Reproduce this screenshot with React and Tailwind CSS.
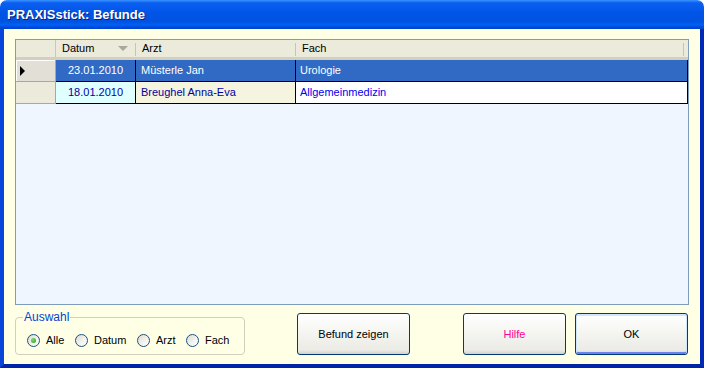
import React from "react";

const rows = [
  { datum: "23.01.2010", arzt: "Müsterle Jan", fach: "Urologie", selected: true },
  { datum: "18.01.2010", arzt: "Breughel Anna-Eva", fach: "Allgemeinmedizin", selected: false },
];

const Radio = ({ label, checked, width }) => (
  <label className={"flex items-center gap-[6px] shrink-0 " + width}>
    <span className="w-[13px] h-[13px] shrink-0 rounded-full border border-[#1C5180] bg-[linear-gradient(135deg,#DCDBD5_0%,#F4F4F0_60%,#FFFFFF_100%)] flex items-center justify-center">
      {checked && <span className="w-[5px] h-[5px] rounded-full bg-[radial-gradient(circle_at_35%_35%,#7BDB6B,#21A121)]"></span>}
    </span>
    <span>{label}</span>
  </label>
);

const XpButton = ({ children, className = "", isDefault }) => (
  <button
    className={
      "h-[42px] shrink-0 rounded-[3px] border border-[#003C74] bg-[linear-gradient(to_bottom,#FFFFFF_0%,#F4F4F0_50%,#ECEBE6_90%,#D6D0C5_100%)] text-[11px] " +
      (isDefault ? "shadow-[inset_0_1px_0_1px_#CEE7FF,inset_0_-1px_0_1px_#6982EE] " : "") +
      className
    }
  >
    {children}
  </button>
);

export default function App() {
  return (
    <div className="w-[704px] h-[368px] overflow-hidden flex flex-col font-['Liberation_Sans',Arial,sans-serif] text-[11px] text-black select-none">
      {/* title bar */}
      <div className="h-[29px] shrink-0 rounded-t-[7px] bg-[linear-gradient(to_bottom,#3A93FF_0%,#0A5EF0_10%,#0054E6_45%,#0052E0_75%,#0060F4_85%,#0049D8_95%,#0040C8_100%)] flex items-center pl-[7px]">
        <span className="text-white font-bold text-[13px] [text-shadow:1px_1px_0_#0A1E80]">PRAXISstick: Befunde</span>
      </div>

      {/* frame + client */}
      <div className="flex-1 min-w-0 flex border-l-4 border-r-4 border-b-4 border-l-[#0845D8] border-r-[#0029B8] border-b-[#0024A8]">
        <div className="flex-1 min-w-0 bg-[#FFFFE6] flex flex-col pt-[10px] px-[11px]">
          {/* grid */}
          <div className="h-[266px] border border-[#7F9DB9] bg-[#F0F6FF] flex flex-col">
            {/* header */}
            <div className="h-[20px] flex bg-[#EBEADB] border-b-[3px] border-[#D3CFBE] shadow-[0_1px_0_#C5C1B0]">
              <div className="w-[40px] border-r border-[#CBC7B8]"></div>
              <div className="w-[80px] flex items-center pl-[6px] pr-[6px] relative">
                <span>Datum</span>
                <span className="ml-auto mr-[2px] w-0 h-0 border-l-[5px] border-r-[5px] border-t-[5px] border-l-transparent border-r-transparent border-t-[#ACA899]"></span>
                <span className="absolute right-0 top-[3px] h-[13px] border-r border-[#C7C5B2]"></span>
              </div>
              <div className="w-[160px] flex items-center pl-[6px] relative">
                <span>Arzt</span>
                <span className="absolute right-0 top-[3px] h-[13px] border-r border-[#C7C5B2]"></span>
              </div>
              <div className="flex-1 flex items-center pl-[6px] relative">
                <span>Fach</span>
                <span className="absolute right-[4px] top-[3px] h-[13px] border-r border-[#C7C5B2]"></span>
              </div>
            </div>

            {rows.map((r, i) => (
              <div key={i} className="h-[22px] flex">
                <div
                  className={
                    "w-[40px] h-full flex items-center pl-[4px] border-r border-b border-[#ACA899] " +
                    (r.selected ? "bg-[#E2E0D6] shadow-[inset_1px_1px_0_#FFFFFF]" : "bg-[#EBEADB]")
                  }
                >
                  {r.selected && (
                    <span className="w-0 h-0 border-t-[5px] border-b-[5px] border-l-[5px] border-t-transparent border-b-transparent border-l-black"></span>
                  )}
                </div>
                <div
                  className={
                    "w-[80px] flex items-center justify-center border-r border-b border-black " +
                    (r.selected ? "bg-[#316AC5] text-white" : "bg-[#E0FFFF] text-[#0000A8]")
                  }
                >
                  {r.datum}
                </div>
                <div
                  className={
                    "w-[160px] flex items-center pl-[5px] border-r border-b border-black " +
                    (r.selected ? "bg-[#316AC5] text-white" : "bg-[#F5F4DE] text-[#0000A8]")
                  }
                >
                  {r.arzt}
                </div>
                <div
                  className={
                    "flex-1 flex items-center pl-[4px] border-r border-b border-black " +
                    (r.selected ? "bg-[#316AC5] text-white" : "bg-white text-[#0000F0]")
                  }
                >
                  {r.fach}
                </div>
              </div>
            ))}
          </div>

          {/* bottom */}
          <div className="flex items-start mt-[8px]">
            <fieldset className="w-[230px] min-w-0 shrink-0 h-[47px] border border-[#D0D0BF] rounded-[4px] pl-[11px] pr-0 pt-[6px] m-0 mt-[-5px]">
              <legend className="text-[#0046D5] text-[12px] px-[1px] ml-[-4px]">Auswahl</legend>
              <div className="flex items-center">
                <Radio label="Alle" checked width="w-[48px]" />
                <Radio label="Datum" width="w-[62px]" />
                <Radio label="Arzt" width="w-[49px]" />
                <Radio label="Fach" width="w-[50px]" />
              </div>
            </fieldset>
            <XpButton className="w-[113px] ml-[52px]">Befund zeigen</XpButton>
            <XpButton className="w-[103px] ml-[53px] text-[#FF0099]">Hilfe</XpButton>
            <XpButton className="w-[113px] ml-[9px]" isDefault>OK</XpButton>
          </div>
        </div>
      </div>
    </div>
  );
}
